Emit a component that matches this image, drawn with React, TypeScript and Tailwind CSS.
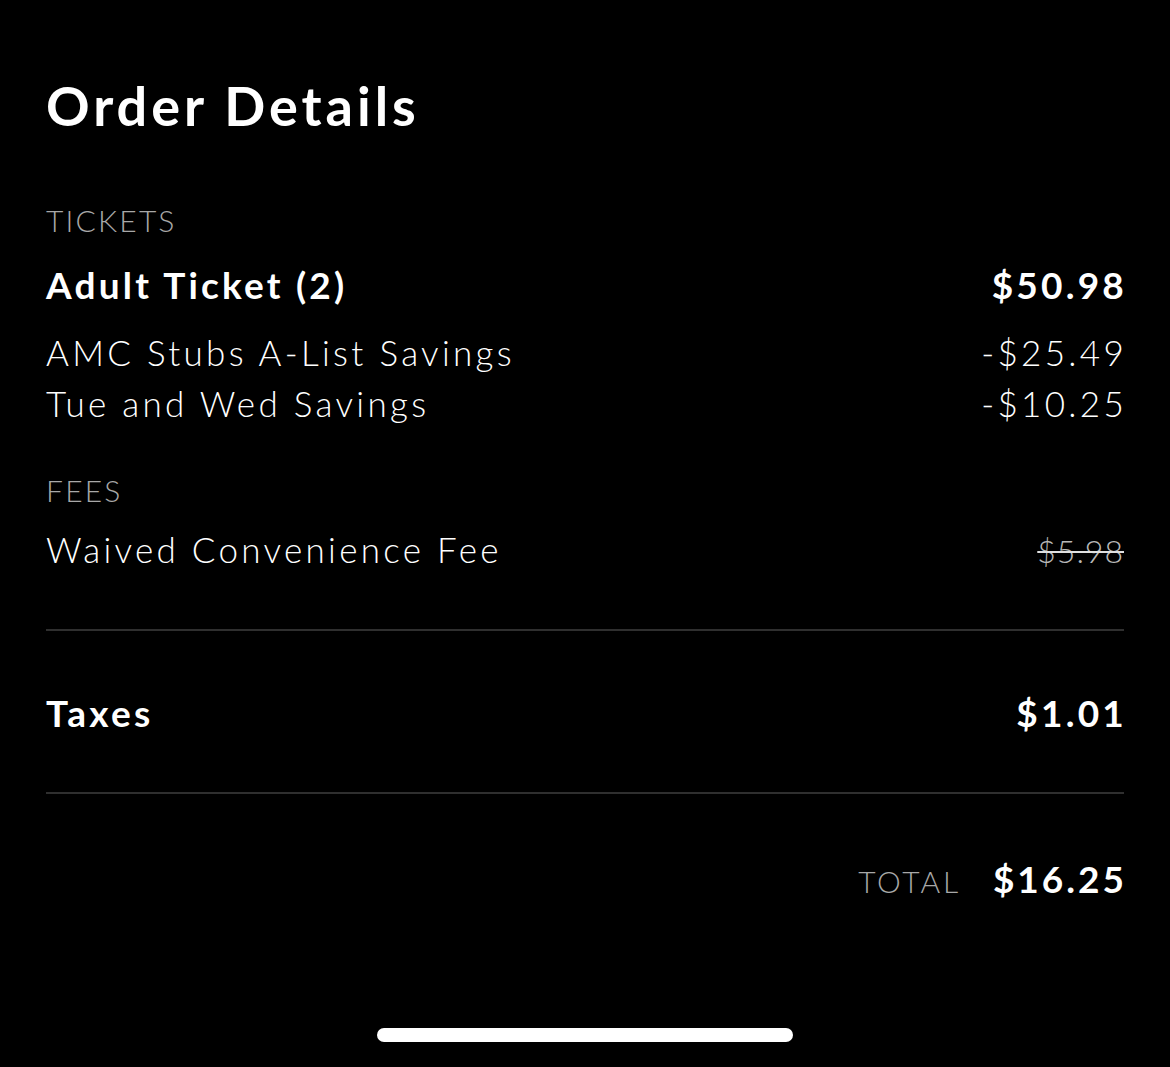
import React from 'react';

const font = { fontFamily: 'Lato, "Open Sans", sans-serif' };

interface LineProps {
  label: string;
  value: string;
  bold?: boolean;
  className?: string;
}

function Line({ label, value, bold = false, className = '' }: LineProps) {
  if (bold) {
    return (
      <div className={`flex items-baseline justify-between text-[37px] leading-[44px] font-bold tracking-[3.2px] text-white ${className}`}>
        <span>{label}</span>
        <span className="mr-[-3px]">{value}</span>
      </div>
    );
  }
  return (
    <div className={`flex items-baseline justify-between text-[35px] leading-[51px] font-light tracking-[3.3px] text-white ${className}`}>
      <span>{label}</span>
      <span className="mr-[-3px]">{value}</span>
    </div>
  );
}

function SectionLabel({ children, className = '' }: { children: React.ReactNode; className?: string }) {
  return (
    <div className={`text-[30px] leading-[36px] font-light tracking-[2.2px] text-[#a8a8a8] ${className}`}>
      {children}
    </div>
  );
}

export default function App() {
  return (
    <div className="min-h-[1067px] w-[1170px] bg-black flex flex-col" style={font}>
      <div className="px-[46px] pt-[76px] flex flex-col">
        <h1 className="text-[54px] leading-[60px] font-bold text-white tracking-[4px]">Order Details</h1>

        <SectionLabel className="mt-[66px]">TICKETS</SectionLabel>
        <Line label="Adult Ticket (2)" value="$50.98" bold className="mt-[25px]" />
        <Line label="AMC Stubs A-List Savings" value="-$25.49" className="mt-[20px]" />
        <Line label="Tue and Wed Savings" value="-$10.25" />

        <SectionLabel className="mt-[43px]">FEES</SectionLabel>
        <div className="mt-[16px] flex items-baseline justify-between text-[35px] leading-[51px] font-light tracking-[3.3px] text-white">
          <span>Waived Convenience Fee</span>
          <span className="text-[32px] tracking-[1px] text-[#b8b8b8] line-through decoration-[#e0e0e0] decoration-[2px]">$5.98</span>
        </div>

        <div className="mt-[53px] h-[2px] bg-[#2f2f2f]" />

        <Line label="Taxes" value="$1.01" bold className="mt-[60px]" />

        <div className="mt-[57px] h-[2px] bg-[#2f2f2f]" />

        <div className="mt-[63px] flex items-baseline justify-end gap-[32px]">
          <span className="text-[30px] leading-[44px] font-light tracking-[2.8px] text-[#a8a8a8]">TOTAL</span>
          <span className="mr-[-3px] text-[37px] leading-[44px] font-bold tracking-[3px] text-white">$16.25</span>
        </div>
      </div>

      <div className="mt-auto pb-[25px] flex justify-center">
        <div className="h-[14px] w-[416px] rounded-full bg-white" />
      </div>
    </div>
  );
}
